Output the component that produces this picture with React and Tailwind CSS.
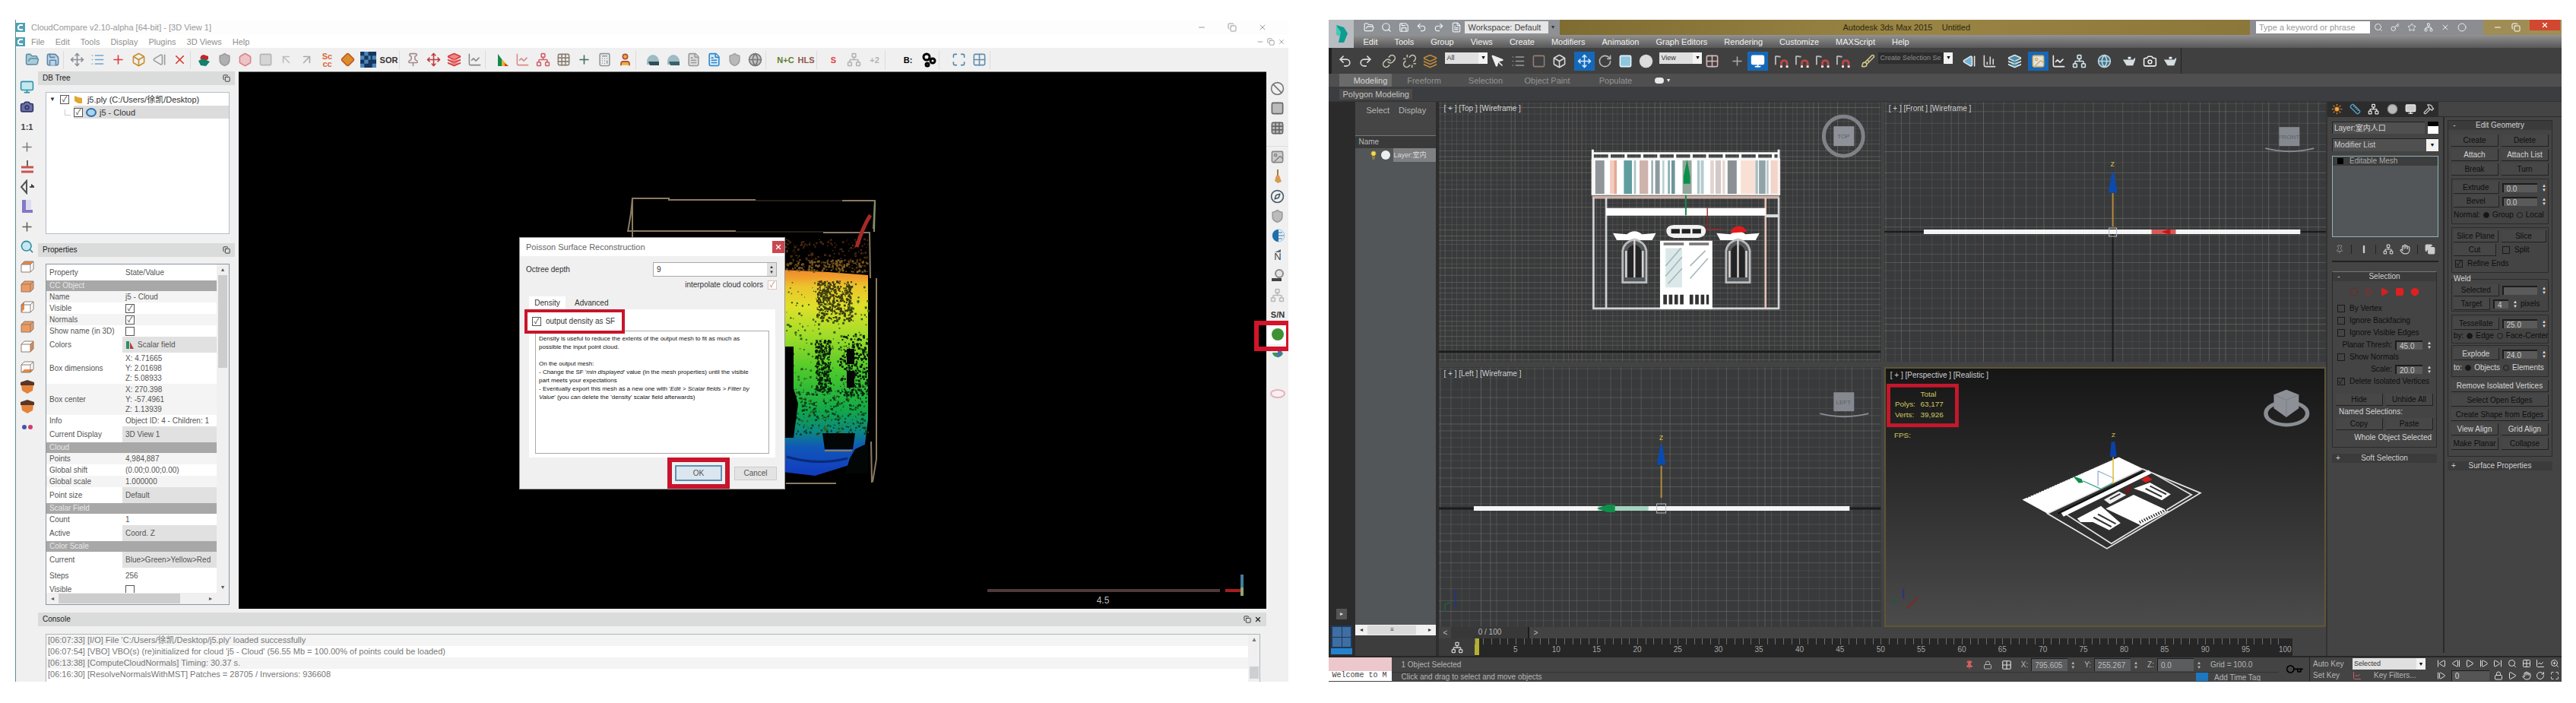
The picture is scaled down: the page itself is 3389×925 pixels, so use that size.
import React from "react";
import {
  ArrowUpLeft, ArrowUpRight, Ban, BarChart3, Box, Brush, Calculator, Camera, Circle, Cog, Compass, Copy,
  Crosshair, CupSoda, Diamond, FileText, FolderOpen, Globe, Grid2x2, Grid3x3, Hammer, Hand, Hexagon, Image, Key,
  Layers, Lightbulb, LineChart, Link, List, Lock, Magnet, Maximize, Minus, Monitor, MousePointer, Move, Network,
  Pin, Play, Plus, Redo2, RotateCw, Ruler, Save, Search, Shield, SkipBack, SkipForward, Square, Star, StepBack,
  StepForward, Sun, Target, Undo2, Unlink, User, X, ZoomIn,
} from "lucide-react";

// small seeded generator, so the drawings stay the same on each render
const makeRandom = (seed) => () => {
  seed = (seed * 1103515245 + 12345) % 2147483648;
  return seed / 2147483648;
};

const specks = (seed, count, x, y, w, h) => {
  const rnd = makeRandom(seed);
  return Array.from({ length: count }, () => [x + rnd() * w, y + rnd() * h, 1 + rnd() * 2]);
};

const Specks = ({ points, fill }) => (
  <g fill={fill}>
    {points.map(([x, y, s], i) => (
      <rect key={i} x={x} y={y} width={s} height={s} />
    ))}
  </g>
);

const App = () => {
  return (
    <div className="flex gap-[53px] bg-white pt-[26px] pb-[27px] pl-5 pr-[19px] text-[11px] leading-[14px] font-['Liberation_Sans','Noto_Sans_CJK_SC',sans-serif]">
      <CloudWindow />
      <MaxWindow />
    </div>
  );
};

/* ---------- CloudCompare ---------- */

const mainTools = [
  { gap: "ml-2", items: [[FolderOpen, "text-[#5f8ea3] fill-[#a9cbd8]"], [Save, "text-[#5d86a8] fill-[#bcd6e8]"]] },
  {
    gap: "ml-1",
    items: [
      [Move, "text-[#8a9096]"], [List, "text-[#6fa4cf]"], [Plus, "text-[#e0393e]"],
      [Box, "text-[#c98d2c]"], [StepBack, "text-[#9a9a9a]"], [X, "text-[#d9372c]"],
    ],
  },
  {
    gap: "ml-1",
    items: [
      ["rg"], [Shield, "text-[#9b9b9b] fill-[#b0b0b0]"], [Hexagon, "text-[#d9848a] fill-[#ecc4c6]"], [Square, "text-[#b5b5b5] fill-[#d5d5d5]"],
      [ArrowUpLeft, "text-[#bdbdbd]"], [ArrowUpRight, "text-[#a8a8a8]"], ["Sc cc", "text-[#d9673a]"],
      [Diamond, "text-[#b95f1e] fill-[#e08a2e]"], ["checker"], ["SOR", "text-[#333]"],
    ],
  },
  {
    gap: "ml-1",
    items: [
      [Pin, "text-[#a58a8a]"], [Move, "text-[#c23a3a]"], [Layers, "text-[#d63a3a] fill-[#e88]"], [LineChart, "text-[#8a8a8a]"],
    ],
  },
  {
    gap: "ml-2",
    items: [
      ["tri"], [LineChart, "text-[#d98a8a]"], [Network, "text-[#d0606a]"], [Grid3x3, "text-[#8b7f73]"],
      [Plus, "text-[#3f6f5c]"], [Calculator, "text-[#8f959b]"], [User, "text-[#b8453a] fill-[#e2b33c]"],
    ],
  },
  {
    gap: "ml-2",
    items: [
      ["cap", "#2f4f56"], ["cap", "#3d6168"], [FileText, "text-[#9a9a9a] fill-[#ddd]"],
      [FileText, "text-[#2d86c9] fill-[#d4e8f6]"], [Shield, "text-[#a0a0a0] fill-[#b8b8b8]"], [Globe, "text-[#777] fill-[#c4c4c4]"],
    ],
  },
  { gap: "ml-3", items: [["N+C", "text-[#5f7d2e]"], ["HLS", "text-[#8a5a4a]"]] },
  { gap: "ml-2", items: [["S", "text-[#e04040]"], [Network, "text-[#b3b3b3]"], ["+2", "text-[#b3b3b3]"]] },
  { gap: "ml-4", items: [["B:", "text-black"], ["cogs"]] },
  { gap: "ml-3", items: [[Maximize, "text-[#4f86ad]"], [Grid2x2, "text-[#5f8fb0]"]] },
];

const viewTools = [
  [Monitor, "text-[#2f93a8] fill-[#c5e8ef]"], [Camera, "text-[#2f3566] fill-[#6a6fa5]"], ["1:1", "text-[#444]"], [Plus, "text-[#7d7d7d]"],
  ["pivot"], ["fly"], ["corner"], [Plus, "text-[#5f6657]"], [Search, "text-[#2b8ba3] fill-[#c5e8ef]"],
  ["cube", "top"], ["cube", "full"], ["cube", "left"], ["cube", "full"], ["cube", "right"], ["cube", "bottom"],
  ["shield"], ["shield"], ["dots"],
];

const shaderTools = [
  [Ban, "text-[#777]"], [Grid2x2, "text-[#666] fill-[#bbb]"], [Grid3x3, "text-[#666] fill-[#bbb]"], null,
  [Image, "text-[#888] fill-[#ccc]"], ["brush"], [Compass, "text-[#4a5b66]"], [Shield, "text-[#999] fill-[#bbb]"],
  ["half"], ["north"], ["lens"], [Network, "text-[#b9b9b9]"],
  ["S/N", "text-[#333]"], ["green"], ["multi"], null, ["ellipse"],
];

const Glyph = ({ icon }) => {
  const [Icon, style] = icon;
  if (typeof Icon !== "string") return <Icon className={`size-[19px] ${style}`} strokeWidth={2} />;
  switch (Icon) {
    case "rg":
      return (
        <svg viewBox="0 0 20 20" className="size-5">
          <path d="M9 3a5 4 0 0 0 1 8l5-2V5z" fill="#c8242b" />
          <path d="M2 11l6-3 9 4-5 6-7-1z" fill="#12806a" />
        </svg>
      );
    case "checker":
      return (
        <svg viewBox="0 0 20 20" className="size-[21px]">
          <rect width="20" height="20" fill="#14375e" />
          <path d="M5 0h5v5H5zM15 5h5v5h-5zM0 5h5v5H0zM5 10h5v5H5zM10 5h3v5h-3zM15 15h5v5h-5zM0 15h5v5H0z" fill="#4f86b8" />
        </svg>
      );
    case "tri":
      return (
        <svg viewBox="0 0 20 20" className="size-5">
          <path d="M4 2v16h12z" fill="#138a4c" />
          <path d="M9 9v9h9z" fill="#e2b52f" />
          <path d="M13 14v4h5z" fill="#d3372d" />
        </svg>
      );
    case "cap":
      return (
        <svg viewBox="0 0 20 20" className="size-5">
          <path d="M2 12a8 9 0 0 1 16 0v4H2z" fill="#9dbcc4" />
          <path d="M4 12h14v5H6z" fill={style} />
        </svg>
      );
    case "cogs":
      return (
        <svg viewBox="0 0 20 20" className="size-5">
          <circle cx="7" cy="6" r="4" fill="none" stroke="#000" strokeWidth="3" />
          <circle cx="15" cy="11" r="3" fill="none" stroke="#000" strokeWidth="3" />
          <circle cx="8" cy="16" r="2" fill="none" stroke="#000" strokeWidth="3" />
        </svg>
      );
    case "pivot":
      return (
        <svg viewBox="0 0 20 20" className="size-5">
          <path d="M10 2v9" stroke="#666" strokeWidth="2" />
          <path d="M2 11h16M2 17h16" stroke="#c95450" strokeWidth="3" />
        </svg>
      );
    case "fly":
      return (
        <svg viewBox="0 0 20 20" className="size-5">
          <path d="M9 2L2 10l7 8zM13 10h6" fill="none" stroke="#555" strokeWidth="2" />
          <path d="M15 6l4 3-4 1z" fill="#333" />
        </svg>
      );
    case "corner":
      return (
        <svg viewBox="0 0 20 20" className="size-5">
          <path d="M3 1h12v12H3z" fill="#dcd9f2" />
          <path d="M3 1h5v13h9v4H3z" fill="#8379c4" />
        </svg>
      );
    case "cube":
      return (
        <svg viewBox="0 0 20 20" className="size-5">
          <path d="M2 7l4-4h12v10l-4 4H2z" fill={style === "full" ? "#ee9a5f" : "#fff"} />
          {style === "top" && <path d="M2 7l4-4h12l-4 4z" fill="#e98846" />}
          {style === "bottom" && <path d="M2 17l4-4h12l-4 4z" fill="#e98846" />}
          {style === "left" && <path d="M2 7l4-4v10l-4 4z" fill="#e98846" />}
          {style === "right" && <path d="M14 7l4-4v10l-4 4z" fill="#e98846" />}
          <path d="M2 7l4-4h12v10l-4 4H2zM2 7h12v10M14 7l4-4" fill="none" stroke="#8b7d73" />
        </svg>
      );
    case "shield":
      return (
        <svg viewBox="0 0 20 20" className="size-5">
          <path d="M1 4l9-3 9 3v4H1z" fill="#5a3626" />
          <path d="M2 8h16l-1 7-7 4-7-4z" fill="#e58339" />
        </svg>
      );
    case "dots":
      return (
        <svg viewBox="0 0 20 20" className="size-5">
          <circle cx="6" cy="10" r="3" fill="#4455a8" />
          <circle cx="14" cy="10" r="3" fill="#d13b6e" />
        </svg>
      );
    case "brush":
      return (
        <svg viewBox="0 0 20 20" className="size-5">
          <path d="M10 1v10" stroke="#a9793a" strokeWidth="2" />
          <path d="M8 9h4l3 8-5 2-4-3z" fill="#d99a52" />
        </svg>
      );
    case "half":
      return (
        <svg viewBox="0 0 20 20" className="size-5">
          <circle cx="11" cy="10" r="8" fill="#e8f0f6" stroke="#9cc4dc" />
          <path d="M11 2a8 8 0 0 0 0 16z" fill="#1f6fa8" />
          <path d="M11 10h7M11 6h5M11 14h5" stroke="#8fb6d0" strokeWidth="2" />
        </svg>
      );
    case "north":
      return (
        <span className="flex flex-col items-center text-[13px] leading-[12px] text-[#3d4650]">
          <svg viewBox="0 0 8 4" className="h-1 w-2"><path d="M0 4l8-4v4z" fill="#5c6a78" /></svg>
          N
        </span>
      );
    case "lens":
      return (
        <svg viewBox="0 0 20 20" className="size-5">
          <circle cx="12" cy="8" r="5" fill="#e2e2e2" stroke="#8a8a8a" strokeWidth="2" />
          <path d="M2 14h13v4H2z" fill="#444" />
        </svg>
      );
    case "green":
      return (
        <svg viewBox="0 0 20 20" className="size-5">
          <circle cx="10" cy="10" r="8" fill="#3f9135" />
        </svg>
      );
    case "multi":
      return (
        <svg viewBox="0 0 20 20" className="size-5">
          <path d="M3 8a7 6 0 1 0 14 0z" fill="#2f9a5a" />
          <path d="M10 2l6 5-6 8z" fill="#5568c0" />
          <path d="M10 1l3 5H8z" fill="#d0396a" />
        </svg>
      );
    case "ellipse":
      return (
        <svg viewBox="0 0 20 20" className="size-5">
          <ellipse cx="10" cy="10" rx="9" ry="5" fill="#fbeef0" stroke="#e2b3bc" strokeWidth="2" />
        </svg>
      );
    default:
      return <span className={`text-[11px] leading-[10px] font-bold ${style}`}>{Icon}</span>;
  }
};

const CloudWindow = () => {
  return (
    <section className="flex min-w-0 flex-[1675] flex-col overflow-hidden border-l border-[#5c8c94] bg-[#f0f0f0]">
      <div className="flex h-5 items-center justify-between bg-[#fdfdfd] pr-7 text-[#9a9a9a]">
        <div className="flex items-center gap-2">
          <CcLogo />
          <h1>CloudCompare v2.10-alpha [64-bit] - [3D View 1]</h1>
        </div>
        <div className="flex gap-7">
          <button aria-label="Minimize"><Minus className="size-3" /></button>
          <button aria-label="Restore"><Copy className="size-3" /></button>
          <button aria-label="Close"><X className="size-3" /></button>
        </div>
      </div>
      <div className="flex h-[17px] items-center justify-between bg-white pr-1 text-[#8f8f8f]">
        <nav className="flex items-center">
          <CcLogo />
          <div className="ml-2 flex gap-3.5">
            {["File", "Edit", "Tools", "Display", "Plugins", "3D Views", "Help"].map((m) => (
              <button key={m}>{m}</button>
            ))}
          </div>
        </nav>
        <div className="flex gap-1">
          <button aria-label="Minimize view"><Minus className="size-2.5" /></button>
          <button aria-label="Restore view"><Copy className="size-2.5" /></button>
          <button aria-label="Close view"><X className="size-2.5" /></button>
        </div>
      </div>

      <div className="flex h-[31px] items-center bg-[#f0f0f0]">
        {mainTools.map((group, i) => (
          <div key={i} className={`flex border-r border-[#dcdcdc] ${group.gap}`}>
            {group.items.map((icon, j) => (
              <button key={j} aria-label={`Tool ${i + 1}-${j + 1}`} className="flex h-6 w-[27px] items-center justify-center">
                <Glyph icon={icon} />
              </button>
            ))}
          </div>
        ))}
      </div>

      <div className="flex">
        <div className="flex w-[29px] shrink-0 flex-col pt-[7px]">
          <div className="flex h-[474px] flex-col">
            {viewTools.map((icon, i) => (
              <button key={i} aria-label={`View tool ${i + 1}`} className="flex flex-1 items-center justify-center">
                <Glyph icon={icon} />
              </button>
            ))}
          </div>
        </div>

        <div className="flex min-w-0 flex-1 flex-col">
          <div className="flex">
            <aside className="w-[264px] shrink-0 pr-[5px] pb-[5px]">
              <DbTree />
              <Properties />
            </aside>
            <CloudView />
          </div>
          <Console />
        </div>

        <div className="relative flex w-[29px] shrink-0 flex-col pt-[9px]">
          {shaderTools.map((icon, i) =>
            icon ? (
              <button key={i} aria-label={`Shader ${i + 1}`} className={`flex h-[26px] items-center justify-center ${icon[0] === "green" ? "bg-white" : ""}`}>
                <Glyph icon={icon} />
              </button>
            ) : (
              <div key={i} className={i === 3 ? "h-3 border-b border-[#ddd]" : "h-[26px]"} />
            )
          )}
          <div className="pointer-events-none absolute top-[328px] -left-4 h-10 w-12 border-[6px] border-[#d3142a]" />
        </div>
      </div>
    </section>
  );
};

const CcLogo = () => (
  <svg viewBox="0 0 12 12" className="size-3">
    <rect width="12" height="12" fill="#4fa3b5" />
    <path d="M9 3H5L3 5v3l2 1h4" fill="none" stroke="#fff" strokeWidth="2" />
  </svg>
);

const DockHeader = ({ title, closable }) => (
  <div className="flex h-[18px] items-center justify-between bg-[#dadbdb] px-1.5 text-[#222]">
    <h2 className="text-[10px]">{title}</h2>
    <div className="flex gap-1">
      <button aria-label={`Float ${title}`}><Copy className="size-2.5" /></button>
      {closable && <button aria-label={`Close ${title}`}><X className="size-2.5" strokeWidth={3} /></button>}
    </div>
  </div>
);

const Check = ({ label, checked, dark, hideLabel }) => (
  <label className="flex items-center gap-1.5 whitespace-nowrap">
    <input
      type="checkbox"
      defaultChecked={checked}
      aria-label={hideLabel ? label : undefined}
      className={
        dark
          ? "flex size-2.5 shrink-0 appearance-none items-center justify-center border border-[#1a1a1a] text-[#0c0c0c] checked:after:content-['✓'] checked:after:text-[10px]"
          : "flex size-3 shrink-0 appearance-none items-center justify-center border border-[#555] bg-white text-[#333] checked:after:content-['✓'] checked:after:text-[10px]"
      }
    />
    {!hideLabel && label}
  </label>
);

const DbTree = () => (
  <section>
    <DockHeader title="DB Tree" />
    <div className="mt-[9px] mr-[7px] mb-3 ml-2.5 h-[187px] border border-[#b5bec9] bg-white text-[#333]">
      <div className="flex h-[17px] items-center gap-1.5 px-1">
        <span className="text-[8px]">▼</span>
        <Check label="j5.ply visible" checked hideLabel />
        <svg viewBox="0 0 12 12" className="size-3"><path d="M1 1l5 2 5 1v7H6L1 8z" fill="#e3a62f" /></svg>
        <span>j5.ply (C:/Users/徐凯/Desktop)</span>
      </div>
      <div className="flex h-[17px] items-center pl-6">
        <span className="mr-1 h-2 w-2 border-b border-l border-[#ccc]" />
        <div className="flex h-full flex-1 items-center gap-1 bg-[#dcdcdc]">
          <Check label="j5 - Cloud visible" checked hideLabel />
          <svg viewBox="0 0 14 12" className="h-3 w-3.5">
            <ellipse cx="7" cy="6" rx="6" ry="5" fill="#a9d3ee" stroke="#2f6fa8" strokeWidth="2" />
          </svg>
          <span>j5 - Cloud</span>
        </div>
      </div>
    </div>
  </section>
);

const rows = [
  { section: "CC Object" },
  { name: "Name", value: "j5 - Cloud", shade: true },
  { name: "Visible", check: true, on: true },
  { name: "Normals", check: true, on: true, shade: true },
  { name: "Show name (in 3D)", check: true },
  { name: "Colors", value: "Scalar field", tall: true, button: true, icon: true },
  { name: "Box dimensions", lines: ["X: 4.71665", "Y: 2.01698", "Z: 5.08933"] },
  { name: "Box center", lines: ["X: 270.398", "Y: -57.4961", "Z: 1.13939"], shade: true },
  { name: "Info", value: "Object ID: 4 - Children: 1" },
  { name: "Current Display", value: "3D View 1", tall: true, button: true },
  { section: "Cloud" },
  { name: "Points", value: "4,984,887", shade: true },
  { name: "Global shift", value: "(0.00;0.00;0.00)" },
  { name: "Global scale", value: "1.000000", shade: true },
  { name: "Point size", value: "Default", tall: true, button: true },
  { section: "Scalar Field" },
  { name: "Count", value: "1" },
  { name: "Active", value: "Coord. Z", tall: true, button: true },
  { section: "Color Scale" },
  { name: "Current", value: "Blue>Green>Yellow>Red", tall: true, button: true },
  { name: "Steps", value: "256", tall: true },
  { name: "Visible", check: true },
];

const Properties = () => (
  <section>
    <DockHeader title="Properties" />
    <div className="mt-[9px] mr-[7px] ml-2.5 h-[449px] overflow-hidden border border-[#8c97a0] bg-white text-[10px] text-[#555]">
      <div className="flex h-[432px]">
        <div className="min-w-0 flex-1 overflow-hidden">
          <table className="w-full table-fixed border-collapse">
            <thead>
              <tr className="h-[21px] text-left">
                <th className="w-[100px] pl-1 font-normal">Property</th>
                <th className="pl-1 font-normal">State/Value</th>
              </tr>
            </thead>
            <tbody>
              {rows.map((row, i) =>
                row.section ? (
                  <tr key={i} className="h-3.5 bg-[#a8a8a8] text-[#e6e6e6]">
                    <th colSpan={2} className="pl-1 text-left font-normal">{row.section}</th>
                  </tr>
                ) : (
                  <tr
                    key={i}
                    className={`${row.tall ? "h-[21px]" : row.lines ? "h-[41px]" : "h-[15px]"} ${row.shade ? "bg-[#f4f4f4]" : "bg-white"}`}
                  >
                    <td className="p-0 pl-1 whitespace-nowrap">{row.name}</td>
                    <td className={`p-0 pl-1 whitespace-nowrap ${row.button ? "bg-[#e1e1e1]" : ""}`}>
                      {row.check && <Check label={row.name} checked={row.on} hideLabel />}
                      {row.lines && row.lines.map((l) => <div key={l} className="leading-[13px]">{l}</div>)}
                      {row.icon ? (
                        <span className="flex items-center gap-1">
                          <svg viewBox="0 0 12 12" className="size-3">
                            <path d="M1 1h4v10H1z" fill="#2e8f62" />
                            <path d="M6 2l5 9H6z" fill="#b34040" />
                          </svg>
                          {row.value}
                        </span>
                      ) : (
                        row.value
                      )}
                    </td>
                  </tr>
                )
              )}
            </tbody>
          </table>
        </div>
        <div className="flex w-4 flex-col items-center bg-[#f0f0f0] text-[8px]">
          <span>▴</span>
          <div className="h-[122px] w-3 bg-[#cdcdcd]" />
          <span className="mt-auto">▾</span>
        </div>
      </div>
      <div className="flex h-[15px] items-center bg-[#f0f0f0] pr-4 text-[8px]">
        <span className="w-4 text-center">◂</span>
        <div className="h-[13px] w-40 bg-[#cdcdcd]" />
        <span className="ml-auto w-4 text-center">▸</span>
      </div>
    </div>
  </section>
);

const upperSpecks = specks(7, 150, 1033, 312, 108, 38);
const roofSpecks = specks(11, 160, 1033, 340, 108, 16);
const treeSpecks = specks(23, 420, 1074, 368, 46, 52);
const wallSpecks = specks(31, 300, 1034, 370, 108, 200);
const windowSpecks = specks(5, 300, 1072, 446, 20, 68);
const windowSpecks2 = specks(9, 320, 1104, 438, 37, 80);
const lowSpecks = specks(3, 220, 1045, 510, 95, 60);

const CloudView = () => (
  <div className="relative min-w-0 flex-1 border-t border-[#777] bg-black">
    <svg viewBox="314 94 1352 706" preserveAspectRatio="xMinYMin meet" className="absolute inset-0 h-full w-full">
      <defs>
        <linearGradient id="height" x1="0" y1="0" x2="0" y2="1">
          <stop offset="0" stopColor="#ee8a2c" />
          <stop offset="0.04" stopColor="#f0a02c" />
          <stop offset="0.08" stopColor="#ecc42c" />
          <stop offset="0.18" stopColor="#dfe02a" />
          <stop offset="0.32" stopColor="#a0dc28" />
          <stop offset="0.5" stopColor="#48c82c" />
          <stop offset="0.68" stopColor="#12a848" />
          <stop offset="0.78" stopColor="#0b8a80" />
          <stop offset="0.86" stopColor="#1058b8" />
          <stop offset="1" stopColor="#123ac0" />
        </linearGradient>
      </defs>
      <path d="M1030 354l60 3 52 4v190l-5 40-20 20-45 14-42-5z" fill="url(#height)" />
      <Specks points={upperSpecks} fill="#4a2812" />
      <Specks points={roofSpecks} fill="#7a5a20" />
      <Specks points={wallSpecks} fill="#2f6418" />
      <Specks points={treeSpecks} fill="#3a3c10" />
      <Specks points={windowSpecks} fill="#052008" />
      <Specks points={windowSpecks2} fill="#041c08" />
      <Specks points={lowSpecks} fill="#06401f" />
      <path d="M1030 455h14v55l6 20-6 45h-14z" fill="#000" />
      <path d="M1114 458h10v20h-10zM1114 487h10v22h-10zM1082 569h43l-3 21h-37zM1125 590l17-8v40h-30l6-20z" fill="#020604" />
      <path d="M1035 600q40 12 80 2" stroke="#0b2878" strokeWidth="3" fill="none" />
      <g fill="none" stroke="#8a7a60" strokeWidth="2">
        <path d="M832 312v-52h48v2h114M1108 263h43l-2 37M832 260l-2 20-4 24M825 303h143M1083 305h61l1 60M1153 365v238M1146 580l1 54M1153 603l-5 30M1034 635h66M1085 592h36" />
        <path d="M994 263h114M968 304h115" stroke="#241f18" />
        <path d="M1151 264l-1 40" stroke="#7d9468" />
      </g>
      <path d="M1145 282q-10 16-18 42" stroke="#a52a26" strokeWidth="5" fill="none" />
      <path d="M1299 776h306" stroke="#4f3a3a" strokeWidth="4" />
      <text x="1451" y="793" fill="#bbb" fontSize="12" textAnchor="middle">4.5</text>
      <path d="M1612 776h20" stroke="#a81c22" strokeWidth="4" />
      <path d="M1634 755v17" stroke="#3f7f9c" strokeWidth="4" />
      <path d="M1634 772v11" stroke="#8fa86c" strokeWidth="4" />
    </svg>
    <PoissonDialog />
  </div>
);

const PoissonDialog = () => (
  <form className="absolute top-[217px] left-[369px] flex h-[332px] w-[350px] flex-col border border-[#999] bg-[#f0f0f0] text-[10px] text-[#333]">
    <div className="flex h-[25px] items-center justify-between bg-white pl-2">
      <h2 className="text-[11px] text-[#666]">Poisson Surface Reconstruction</h2>
      <button type="button" aria-label="Close" className="flex size-4 items-center justify-center bg-[#c9484f] text-white">
        <X className="size-2.5" strokeWidth={3} />
      </button>
    </div>
    <div className="flex items-center justify-between pt-2 pr-2.5 pl-2">
      <label htmlFor="octree">Octree depth</label>
      <div className="flex h-[19px] w-[163px] border border-[#aaa] bg-white">
        <input id="octree" defaultValue="9" className="min-w-0 flex-1 px-1" />
        <span className="flex w-3 flex-col justify-center bg-[#e0e0e0] text-center text-[6px] leading-[7px]">
          <span>▲</span><span>▼</span>
        </span>
      </div>
    </div>
    <label className="mt-1 flex items-center justify-end gap-1.5 pr-2.5">
      interpolate cloud colors
      <input
        type="checkbox"
        defaultChecked
        className="flex size-3 appearance-none items-center justify-center border border-[#ddc4bc] bg-white text-[#b07a5a] checked:after:content-['✓'] checked:after:text-[10px]"
      />
    </label>
    <div className="mt-2 flex px-3">
      <button type="button" className="h-[17px] w-12 bg-white">Density</button>
      <button type="button" className="ml-2 h-[17px] px-1">Advanced</button>
    </div>
    <div className="mx-3 flex h-[200px] flex-col bg-white">
      <div className="z-10 -ml-1.5 flex h-8 w-[132px] items-center border-4 border-[#c8142c] bg-white pl-1.5">
        <Check label="output density as SF" checked />
      </div>
      <div className="mr-2 -mt-1 ml-2 h-[162px] border border-[#aaa] p-1 text-[8px] leading-[11px] whitespace-nowrap text-[#111]">
        <p>Density is useful to reduce the extents of the output mesh to fit as much as</p>
        <p>possible the input point cloud.</p>
        <br />
        <p>On the output mesh:</p>
        <p>- Change the SF '<i>min displayed</i>' value (in the mesh properties) until the visible</p>
        <p>part meets your expectations</p>
        <p>- Eventually export this mesh as a new one with '<i>Edit &gt; Scalar fields &gt; Filter by</i></p>
        <p><i>Value</i>' (you can delete the 'density' scalar field afterwards)</p>
      </div>
    </div>
    <div className="mt-auto flex items-center justify-end gap-1.5 pr-2.5 text-[#555]">
      <div className="h-[41px] w-[82px] border-[6px] border-[#c8142c] p-1">
        <button type="submit" className="h-full w-full border-2 border-[#5b93b5] bg-[#dbe6ee] leading-[15px]">OK</button>
      </div>
      <button type="button" className="h-[18px] w-14 border border-[#ccc] bg-[#e3e3e3]">Cancel</button>
    </div>
  </form>
);

const log = [
  "[06:07:33] [I/O] File 'C:/Users/徐凯/Desktop/j5.ply' loaded successfully",
  "[06:07:54] [VBO] VBO(s) (re)initialized for cloud 'j5 - Cloud' (56.55 Mb = 100.00% of points could be loaded)",
  "[06:13:38] [ComputeCloudNormals] Timing: 30.37 s.",
  "[06:16:30] [ResolveNormalsWithMST] Patches = 28705 / Inversions: 936608",
];

const Console = () => (
  <section className="pt-[5px]">
    <DockHeader title="Console" closable />
    <div className="mt-2.5 mr-2 ml-2.5 flex h-[63px] border border-b-0 border-[#b0b6ba] bg-white">
      <div className="flex-1 text-[#777]">
        {log.map((line) => (
          <p key={line} className="h-[15px] bg-white px-0.5 odd:bg-[#f4f4f4]">{line}</p>
        ))}
      </div>
      <div className="flex w-[15px] flex-col items-center bg-[#f0f0f0] text-[8px] text-[#777]">
        <span>▲</span>
        <div className="mt-auto mb-1 h-4 w-3 bg-[#cdd0d1]" />
      </div>
    </div>
  </section>
);

/* ---------- 3ds Max ---------- */

const MaxWindow = () => {
  return (
    <section className="flex min-w-0 flex-[1622] flex-col overflow-hidden bg-[#444] text-[#ddd]">
      <header className="flex">
        <div className="flex h-[37px] w-[33px] shrink-0 items-center justify-center bg-[#b9bcc0]">
          <svg viewBox="0 0 20 28" className="h-7 w-5">
            <path d="M3 2l10 3 5 8-5 12H6l2-9z" fill="#0c9c90" />
            <path d="M3 2l6 9-1 6-5-2z" fill="#48c8b8" />
          </svg>
        </div>
        <div className="min-w-0 flex-1">
          <MaxTitleBar />
          <nav className="flex h-[17px] items-center gap-[22px] bg-linear-to-b from-[#929292] to-[#585858] pl-3 text-[#f2f2f2]">
            {["Edit", "Tools", "Group", "Views", "Create", "Modifiers", "Animation", "Graph Editors", "Rendering", "Customize", "MAXScript", "Help"].map((m) => (
              <button key={m}>{m}</button>
            ))}
          </nav>
        </div>
      </header>
      <MaxToolbar />
      <div className="flex h-[17px] items-center bg-[#4f4f4f] pl-3.5 text-[#949494]">
        <button className="h-full w-[69px] bg-[#6a6a6a] pl-3 text-[#d5d5d5]">Modeling</button>
        <button className="ml-3 w-[60px]">Freeform</button>
        <button className="ml-6 w-[54px]">Selection</button>
        <button className="ml-4 w-[76px]">Object Paint</button>
        <button className="ml-6 w-14">Populate</button>
        <button aria-label="Ribbon options" className="ml-6 flex items-center gap-1 text-[8px] text-[#eee]">
          <span className="h-2 w-3 rounded-sm bg-[#e8e8e8]" /> ▾
        </button>
      </div>
      <div className="flex h-[19px] items-center bg-[#3c3d40] pl-3.5 text-[#c4c4c4]">
        <span className="bg-[#4b4b4b] px-1">Polygon Modeling</span>
      </div>

      <div className="flex border-t border-[#333]">
        <div className="flex w-[34px] shrink-0 flex-col items-center bg-[#2b2b2b] pb-0.5">
          <span className="mt-auto mb-2 flex size-3.5 items-center justify-center bg-[#555] text-[8px]">▸</span>
          <div className="grid h-[38px] w-7 grid-cols-2 gap-px border-b-8 border-[#2482cc] bg-[#1d3a5c] p-0.5">
            <span className="bg-[#3f6ea3]" /><span className="bg-[#3f6ea3]" />
            <span className="bg-[#3f6ea3]" /><span className="bg-[#3f6ea3]" />
          </div>
        </div>
        <SceneExplorer />
        <div className="min-w-0 flex-1">
          <div className="grid grid-cols-2 gap-x-1 gap-y-[7px] bg-[#434343]">
            <TopView />
            <FrontView />
            <LeftView />
            <PerspectiveView />
          </div>
          <Timeline />
        </div>
        <CommandPanel />
      </div>
      <StatusBar />
    </section>
  );
};

const quickIcons = [FolderOpen, Search, Save, Undo2, Redo2, FileText];
const infoIcons = [Search, Key, Star, Network, X, Circle];

const MaxTitleBar = () => (
  <div className="flex h-5 bg-[#8f7a3c]">
    <div className="flex w-[271px] shrink-0 items-center bg-[#8e9296] pl-2 text-[#eef2f5]">
      {quickIcons.map((Icon, i) => (
        <button key={i} aria-label={`Quick access ${i + 1}`} className="flex w-[23px] justify-center">
          <Icon className="size-3.5" />
        </button>
      ))}
      <select aria-label="Workspace" className="h-4 w-[110px] appearance-none bg-[#e6e6e6] px-1 text-[#444]">
        <option>Workspace: Default</option>
      </select>
      <span className="ml-1 text-[8px] text-[#333]">▾</span>
    </div>
    <h1 className="flex flex-1 items-center justify-center bg-linear-to-r from-[#7f6c31] via-[#9a8545] to-[#8c773a] pl-1 whitespace-pre text-[#2e2910]">
      Autodesk 3ds Max 2015    Untitled
    </h1>
    <div className="flex w-[307px] shrink-0 items-center bg-[#8b8d90] pl-2">
      <input aria-label="Search" placeholder="Type a keyword or phrase" className="h-4 w-[150px] bg-white px-1 text-[#555] placeholder:text-[#999]" />
      {infoIcons.map((Icon, i) => (
        <button key={i} aria-label={`Info center ${i + 1}`} className="flex w-[22px] justify-center text-[#e4ebf2]">
          <Icon className="size-3" />
        </button>
      ))}
    </div>
    <div className="flex w-[103px] shrink-0 justify-end gap-3 bg-[#a08d55] pr-0.5 text-white">
      <button aria-label="Minimize"><Minus className="size-3" /></button>
      <button aria-label="Restore"><Copy className="size-3" /></button>
      <button aria-label="Close" className="flex h-3.5 w-10 items-center justify-center bg-[#d2472f]">
        <X className="size-2.5" strokeWidth={3} />
      </button>
    </div>
  </div>
);

const DropDown = ({ label, value, width, dark }) => (
  <div className={`flex h-[15px] items-center ${width} ${dark ? "bg-[#2e2e2e] text-[#8d8d8d]" : "bg-[#e0e0e0] text-[#333]"}`}>
    <select aria-label={label} className="h-full min-w-0 flex-1 appearance-none pl-0.5 text-[9px]">
      <option>{value}</option>
    </select>
    <span className="flex h-full w-3 shrink-0 items-center justify-center bg-[#f2f2f2] text-[7px] text-black">▼</span>
  </div>
);

const MaxTool = ({ Icon, on, color = "text-[#d9d9d9]", name }) => (
  <button aria-label={name} className={`flex h-[25px] w-[27px] shrink-0 items-center justify-center ${on ? "bg-[#1568b8]" : ""}`}>
    <Icon className={`size-[19px] ${color}`} strokeWidth={2} />
  </button>
);

const Gap = () => <div className="w-1.5" />;

const SnapIcon = ({ className }) => (
  <svg viewBox="0 0 20 20" className={className} fill="none">
    <path d="M2 3l7 1M2 3v12" stroke="#b5b5b5" strokeWidth="2" />
    <path d="M10 18v-5q0-4 4-4t4 4v5" stroke="#b84848" strokeWidth="3" />
    <path d="M10 16v3M18 16v3" stroke="#eee" strokeWidth="3" />
  </svg>
);

const Teapot = ({ className }) => (
  <svg viewBox="0 0 20 20" className={className}>
    <path d="M5 8h10l3-3v3l-3 8H6L1 8z" fill="#d4dde0" />
    <path d="M8 4h4v3H8z" fill="#eee" />
  </svg>
);

const MaxToolbar = () => (
  <div className="flex h-[34px] items-center border-l-4 border-[#222] bg-[#404040] pl-1 text-[#d9d9d9]">
    <MaxTool Icon={Undo2} name="Undo" />
    <MaxTool Icon={Redo2} name="Redo" />
    <div className="w-1" />
    <MaxTool Icon={Link} name="Link" color="text-[#c4bfae]" />
    <MaxTool Icon={Unlink} name="Unlink" color="text-[#c4bfae]" />
    <MaxTool Icon={Layers} name="Bind" color="text-[#c08a3a]" />
    <Gap />
    <div className="pb-2"><DropDown label="Selection filter" value="All" width="w-14" /></div>
    <MaxTool Icon={MousePointer} name="Select" color="fill-[#eee] text-[#eee]" />
    <MaxTool Icon={List} name="Select by name" color="text-[#999]" />
    <MaxTool Icon={Square} name="Region" color="text-[#8f7f75]" />
    <MaxTool Icon={Box} name="Window crossing" />
    <Gap />
    <MaxTool Icon={Move} name="Move" on color="text-[#cfe8ff]" />
    <MaxTool Icon={RotateCw} name="Rotate" color="text-[#b8b8b8]" />
    <MaxTool Icon={Square} name="Scale" color="fill-[#8fc7dd] text-[#e6f3f8]" />
    <MaxTool Icon={Crosshair} name="Place" color="fill-[#ddd]" />
    <div className="w-1" />
    <div className="pb-2"><DropDown label="Reference coordinates" value="View" width="w-14" /></div>
    <MaxTool Icon={Grid2x2} name="Pivot" color="text-[#d6b6b6]" />
    <Gap />
    <MaxTool Icon={Plus} name="Manipulate" color="text-[#aaa]" />
    <MaxTool Icon={Monitor} name="Keyboard override" on color="fill-white text-white" />
    <div className="w-1" />
    <MaxTool Icon={SnapIcon} name="Snap" />
    <MaxTool Icon={SnapIcon} name="Angle snap" />
    <MaxTool Icon={SnapIcon} name="Percent snap" />
    <MaxTool Icon={SnapIcon} name="Spinner snap" />
    <Gap />
    <MaxTool Icon={Brush} name="Edit sets" color="text-[#cfc48a]" />
    <div className="pb-2"><DropDown label="Named selection sets" value="Create Selection Se" width="w-[98px]" dark /></div>
    <div className="w-2" />
    <MaxTool Icon={StepBack} name="Mirror" color="fill-[#6fb3d6] text-[#e8e8e8]" />
    <MaxTool Icon={BarChart3} name="Align" />
    <Gap />
    <MaxTool Icon={Layers} name="Layers" color="fill-[#4f8ca6] text-[#d8e8ee]" />
    <div className="w-1" />
    <MaxTool Icon={Image} name="Ribbon" on color="fill-[#d8e6ee] text-[#e0b060]" />
    <MaxTool Icon={LineChart} name="Curve editor" color="text-[#eee]" />
    <MaxTool Icon={Network} name="Schematic" color="text-[#cfe4ea]" />
    <Gap />
    <MaxTool Icon={Globe} name="Material editor" color="fill-[#3f6f86] text-[#bcd4de]" />
    <Gap />
    <MaxTool Icon={Teapot} name="Render setup" />
    <MaxTool Icon={Camera} name="Rendered frame" color="text-[#eee]" />
    <MaxTool Icon={Teapot} name="Render" />
    <div className="h-full w-px bg-[#222]" />
  </div>
);

const SceneExplorer = () => (
  <aside className="flex w-[111px] shrink-0 flex-col border-r-4 border-l border-[#2d2d2d] bg-[#454545]">
    <div className="flex h-11 gap-3 px-3.5 pt-1 text-[#b5b5b5]">
      <button className="self-start">Select</button>
      <button className="self-start">Display</button>
    </div>
    <div className="flex h-[17px] items-center border-t border-[#777] bg-[#3a3a3a] pl-1 text-[10px] text-[#bbb]">Name</div>
    <div className="flex-1 bg-[#525658]">
      <div className="flex h-[18px] items-center gap-1 pl-[18px]">
        <Lightbulb className="size-3 fill-[#f2dc50] text-[#c8a830]" />
        <span className="size-3 rounded-full bg-[#eee]" />
        <span className="flex-1 bg-[#7e8082] text-[9px] leading-[18px] whitespace-nowrap text-[#d8d8d8]">Layer:室内</span>
      </div>
    </div>
    <div className="flex h-3.5 items-center bg-[#f0f0f0] text-[8px] text-[#333]">
      <span className="w-4 text-center">◂</span>
      <span className="w-16 bg-[#dadada] text-center leading-[12px]">≡</span>
      <span className="ml-auto w-4 text-center">▸</span>
    </div>
    <div className="h-[27px] bg-[#3d3d3d]" />
  </aside>
);

const gridLines = (seed, size, step) => {
  const rnd = makeRandom(seed);
  const out = [];
  for (let p = 2; p < size; p += step + rnd() * step) out.push([p, 0.25 + rnd() * 0.6]);
  return out;
};

const Grid = ({ seed, step }) => (
  <g stroke="#6a6461">
    {gridLines(seed, 582, step).map(([x, o]) => (
      <path key={x} d={`M${x} 0v342`} opacity={o} />
    ))}
    {gridLines(seed + 40, 342, step).map(([y, o]) => (
      <path key={y} d={`M0 ${y}h582`} opacity={o} />
    ))}
  </g>
);

const Viewport = ({ label, className = "bg-[#383a3b]", children }) => (
  <div className={`relative h-[342px] overflow-hidden ${className}`}>
    <svg viewBox="0 0 582 342" preserveAspectRatio="xMidYMid meet" className="absolute inset-0 h-full w-full">
      {children}
    </svg>
    <span className="absolute top-0.5 left-1.5 text-[10px] text-[#cfcfcf]">{label}</span>
  </div>
);

const ViewCube = ({ x, label }) => (
  <g>
    <path d={`M${x - 18} 61q32 8 64 0`} fill="none" stroke="#8a8d92" strokeWidth="2" />
    <rect x={x} y="33" width="27" height="25" fill="#85888f" />
    <text x={x + 13} y="49" fontSize="8" fill="#5c6068" textAnchor="middle">{label}</text>
  </g>
);

const stripes = [
  [297, 36, "#8f9598"], [355, 26, "#f3cdbf"], [372, 10, "#e6a896"], [410, 32, "#5f9da0"], [450, 8, "#a6c4c6"],
  [472, 34, "#cdb3ac"], [518, 8, "#9fb2b8"], [534, 18, "#8c9aa0"], [562, 8, "#b8d0d4"], [584, 8, "#86adb0"],
  [598, 14, "#6f9599"], [642, 36, "#93a79c"], [700, 10, "#a9c6cb"], [714, 12, "#b5cbd2"], [752, 14, "#e3d3cf"],
  [772, 22, "#d3cac8"], [800, 10, "#e6d6d0"], [820, 36, "#8a9194"], [872, 58, "#f9e0d5"], [930, 10, "#a7bcc2"],
  [944, 26, "#92a3a8"], [974, 8, "#b9c7cb"], [990, 38, "#f3d4c8"],
];

const FacadeWindow = ({ x, hot }) => (
  <g>
    <path d={`M${x - 85} 470l55 5q30-25 60 0l55-5-15 28h-140z`} fill="#fff" />
    {hot && <path d={`M${x - 30} 470q5-25 30-27t35 22z`} fill="#e01c1c" />}
    <path d={`M${x - 47} 665V540q5-35 47-45 42 10 47 45v125z`} fill="#55595b" stroke="#b9bcbe" strokeWidth="8" />
    <path d={`M${x - 27} 645V540q4-20 27-25 23 5 27 25v105z`} fill="#222425" />
    <path d={`M${x} 495v150M${x - 33} 540v105M${x + 33} 540v105`} stroke="#e2dad6" strokeWidth="7" />
  </g>
);

const Facade = () => (
  <g transform="translate(107 16) scale(0.3333)">
    <path d="M282 175h746v145H282z" fill="#fff" />
    {stripes.map(([x, w, fill]) => (
      <rect key={x} x={x} y="183" width={w} height="132" fill={fill} />
    ))}
    <path d="M287 140v180M1022 140v180M285 155h740M285 177h740" stroke="#f4f4f4" strokeWidth="9" />
    {[353, 418, 482, 547, 612, 677, 740, 806, 870, 936, 1000].map((x) => (
      <path key={x} d={`M${x} 155v22`} stroke="#fff" strokeWidth="10" />
    ))}
    <path d="M285 328h740" stroke="#c9b0a6" strokeWidth="12" />
    <path d="M290 330v438h732V330M340 330v438" fill="none" stroke="#cfd3d5" strokeWidth="8" />
    <path d="M970 330v438" stroke="#e6c2b6" strokeWidth="8" />
    <path d="M340 386h630" stroke="#fff" strokeWidth="30" />
    <path d="M970 402h52" stroke="#d8dcde" strokeWidth="12" />
    <path d="M578 462q0-22 30-24h96q30 2 30 24t-30 27h-96q-30-5-30-27z" fill="#f2f2f2" />
    <path d="M597 463h118" stroke="#222" strokeWidth="18" strokeDasharray="34 8" />
    <path d="M553 500h207v270H553z" fill="#fff" />
    <path d="M567 513h80M668 513h78" stroke="#777" strokeWidth="10" />
    <path d="M575 530h65v155h-65z" fill="#dbe8ea" />
    <path d="M575 600l60-70M575 640l65-75M585 670l55-60M672 600l60-60M672 650l70-80" stroke="#a7b8bb" strokeWidth="5" />
    <path d="M566 733h84M670 733h76" stroke="#333" strokeWidth="38" strokeDasharray="14 8" />
    <FacadeWindow x={452} />
    <FacadeWindow x={861} hot />
    <path d="M655 320v80" stroke="#168a4c" strokeWidth="6" />
    <path d="M646 275v-30l14-65 12 65v30z" fill="#0d8f4a" />
    <path d="M740 370v85h60" stroke="#9c2222" strokeWidth="4" fill="none" />
  </g>
);

const TopView = () => (
  <Viewport label="[ + ] [Top ] [Wireframe ]">
    <Grid seed={3} step={5} />
    <path d="M0 329h582" stroke="#1d1d1d" strokeWidth="3" />
    <Facade />
    <circle cx="533" cy="45" r="26" fill="none" stroke="#7f8287" strokeWidth="5" />
    <rect x="520" y="32" width="27" height="26" fill="#8e9198" />
    <text x="533" y="48" fontSize="8" fill="#5c6068" textAnchor="middle">TOP</text>
  </Viewport>
);

const FrontView = () => (
  <Viewport label="[ + ] [Front ] [Wireframe ]">
    <Grid seed={17} step={8} />
    <path d="M0 171h582M301 171v171" stroke="#1b1b1b" strokeWidth="2" />
    <path d="M52 171h496" stroke="#f4f4f4" strokeWidth="6" />
    <path d="M352 171h32" stroke="#d65a5a" strokeWidth="6" />
    <path d="M365 171l12-4v8z" fill="#c01818" />
    <path d="M301 120v44" stroke="#b48a3a" strokeWidth="2" />
    <path d="M297 118l4-24 4 24z" fill="#0b4bb0" stroke="#0b4bb0" strokeWidth="3" />
    <text x="298" y="85" fontSize="11" fill="#c8b850">z</text>
    <rect x="296" y="166" width="10" height="11" fill="none" stroke="#bbb" />
    <ViewCube x={520} label="FRONT" />
  </Viewport>
);

const LeftView = () => (
  <Viewport label="[ + ] [Left ] [Wireframe ]">
    <Grid seed={29} step={8} />
    <path d="M0 186h582" stroke="#1b1b1b" strokeWidth="3" />
    <path d="M46 186h495" stroke="#f4f4f4" strokeWidth="6" />
    <path d="M210 186h66" stroke="#a3d3bf" strokeWidth="6" />
    <path d="M208 186l14-5h10v10h-10z" fill="#0d8f4a" />
    <path d="M293 130v42" stroke="#b48a3a" strokeWidth="2" />
    <path d="M289 127l4-24 4 24z" fill="#0b4bb0" stroke="#0b4bb0" strokeWidth="3" />
    <text x="290" y="96" fontSize="11" fill="#c8b850">z</text>
    <rect x="287" y="180" width="12" height="12" fill="none" stroke="#bbb" />
    <path d="M22 292v24" stroke="#2a3380" strokeWidth="2" />
    <path d="M8 322v-10l8-2" fill="none" stroke="#1f5a3c" strokeWidth="2" />
    <ViewCube x={520} label="LEFT" />
  </Viewport>
);

const PerspectiveView = () => (
  <Viewport label="[ + ] [Perspective ] [Realistic ]" className="border-2 border-[#5e5634] bg-linear-to-b from-[#161616] to-[#4b4b4b]">
    <g transform="translate(-29 -22) scale(0.3954 0.3333)">
      <path d="M855 420l80 45-320 180-85-55z" fill="#fff" />
      <path d="M545 580l290-155" stroke="#333" strokeWidth="8" strokeDasharray="4 6" />
      <path d="M935 467l195 96-315 222-200-140z" fill="#303030" stroke="#e6e6e6" strokeWidth="5" />
      <path d="M975 487l125 83-270 195-150-115" fill="none" stroke="#e0e0e0" strokeWidth="5" />
      <path d="M935 480L650 645" stroke="#111" strokeWidth="7" />
      <path d="M960 478L665 650" stroke="#fff" strokeWidth="16" />
      <path d="M905 570l118 65-92 58-120-68z" fill="#fff" />
      <path d="M925 680l90-50" stroke="#333" strokeWidth="12" strokeDasharray="4 5" />
      <path d="M805 590l50-34 25 15-55 36z" fill="#f0f0f0" />
      <path d="M825 588l35-22" stroke="#333" strokeWidth="5" />
      <path d="M905 545l55-24 70 47-30 24-60-33z" fill="#fff" />
      <path d="M945 545l55 33M960 535l55 33" stroke="#333" strokeWidth="6" />
      <path d="M715 665l80-50 66 68-38 28-55-32-42 0z" fill="#fff" />
      <path d="M770 660l60 38M785 648l60 38" stroke="#333" strokeWidth="6" />
      <path d="M870 560l30-35-12 38z" fill="#701818" />
      <path d="M930 510l20-15 18 14-22 12z" fill="#d81c1c" />
      <path d="M700 495l30 12 5 14-15 2z" fill="#0d8f4a" />
      <path d="M735 515l60 32 40-25" fill="none" stroke="#4fae98" strokeWidth="4" />
      <path d="M785 475v60M785 475l55 30" fill="none" stroke="#88a8c8" strokeWidth="3" />
      <path d="M836 420v105" stroke="#e0c040" strokeWidth="4" />
      <path d="M825 418l5-60h12l6 60z" fill="#0b40a8" />
      <text x="830" y="338" fontSize="28" fill="#c8b850">z</text>
      <ellipse cx="1420" cy="245" rx="70" ry="46" fill="none" stroke="#8a8d92" strokeWidth="14" />
      <path d="M1377 170l42-20 42 20v55l-42 35-42-35z" fill="#8d9096" />
      <path d="M1377 170l42 22 42-22M1419 192v66" fill="none" stroke="#7d8086" strokeWidth="3" />
      <path d="M130 945v40" stroke="#2a3380" strokeWidth="5" />
      <path d="M100 1010v-30" stroke="#1f5a3c" strokeWidth="6" />
      <path d="M140 1025l40-45" stroke="#7a2a2a" strokeWidth="6" />
    </g>
    <Statistics />
  </Viewport>
);

const Statistics = () => (
  <foreignObject x="0" y="20" width="110" height="84">
    <div className="h-[58px] w-[96px] border-[5px] border-[#c4182c] pt-0.5 pl-1.5 text-[10px] text-[#d2c860]">
      <table className="w-full leading-[14px]">
        <tbody>
          <tr><td className="w-[34px]"></td><td>Total</td></tr>
          <tr><td>Polys:</td><td>63,177</td></tr>
          <tr><td>Verts:</td><td>39,926</td></tr>
        </tbody>
      </table>
    </div>
    <p className="mt-1 pl-2.5 text-[10px] text-[#d2c860]">FPS:</p>
  </foreignObject>
);

const Timeline = () => (
  <div className="bg-[#434343]">
    <div className="flex h-[15px] items-center text-[10px] text-[#bbb]">
      <button aria-label="Previous frame" className="w-4">&lt;</button>
      <div className="h-full w-[103px] border-r-2 border-[#1c1c1c] bg-[#383838] text-center">0 / 100</div>
      <button aria-label="Next frame" className="w-4">&gt;</button>
    </div>
    <div className="mr-11 flex h-[23px] bg-[#262626]">
      <div className="flex w-[47px] shrink-0 items-center justify-center bg-[#3b3b3b]">
        <Network className="size-4 text-[#ccc]" />
      </div>
      <div className="flex flex-1 text-[10px] text-[#a5a5a5]">
        {Array.from({ length: 20 }, (_, i) => (
          <div key={i} className="min-w-0 flex-1">
            <div className="flex h-2 justify-between">
              {[0, 1, 2, 3, 4].map((t) => (
                <span key={t} className="flex-1 border-l border-[#6c6c6c]" />
              ))}
            </div>
            {i === 0 ? (
              <span className="-mt-2 block h-[22px] w-1.5 bg-[#b5b030]" />
            ) : (
              <span className="block w-5 -translate-x-1/2 text-center">{i * 5}</span>
            )}
          </div>
        ))}
        <span className="w-2 pt-2"><span className="-ml-2.5">100</span></span>
      </div>
    </div>
  </div>
);

const off = "text-[#0e0e0e]";
const lit = "text-[#d6d6d6]";

const PanelButton = ({ children, enabled }) => (
  <button className={`h-4 min-w-0 flex-1 border-r border-b border-[#222] bg-[#474747] text-[10px] whitespace-nowrap ${enabled ? lit : off}`}>
    {children}
  </button>
);

const Spin = ({ label, value = "", width = "flex-1" }) => (
  <div className={`flex h-3 min-w-0 ${width}`}>
    <input aria-label={label} defaultValue={value} className="w-full min-w-0 flex-1 border-t-2 border-l-2 border-[#1c1c1c] bg-[#5a5a5a] px-1 text-[10px] leading-none text-[#ccc]" />
    <span className="ml-1.5 flex flex-col justify-center text-[6px] leading-[6px] text-[#ddd]"><span>▲</span><span>▼</span></span>
  </div>
);

const Radio = ({ name, label, checked }) => (
  <label className="flex items-center gap-1">
    <input type="radio" name={name} defaultChecked={checked} className="size-2 appearance-none rounded-full border border-[#1c1c1c] checked:bg-[#151515]" />
    {label}
  </label>
);

const Rollout = ({ title, closed }) => (
  <h3 className="flex h-3 items-center bg-[#3b3b3b] text-[10px] text-[#d0d0d0]">
    <span className="w-4 text-center">{closed ? "+" : "-"}</span>
    <span className="flex-1 pr-4 text-center">{title}</span>
  </h3>
);

const panelTabs = [
  [Sun, "fill-[#f2b04a] text-[#e08a2a]"], [Ruler, "text-[#59a5c8]"], [Network, "text-[#e6e6e6]"],
  [Circle, "fill-[#bbb] text-[#888]"], [Monitor, "fill-[#ccc] text-[#eee]"], [Hammer, "text-[#ccc]"],
];

const CommandPanel = () => (
  <aside className="w-[310px] shrink-0 border-l-2 border-[#333] bg-[#444] text-[10px] leading-3 whitespace-nowrap">
    <div className="flex h-5 border-b border-[#2a2a2a]">
      <div className="flex w-[146px] items-center justify-around bg-[#2c2c2c]">
        {panelTabs.map(([Icon, c], i) => (
          <button key={i} aria-label={`Panel ${i + 1}`}><Icon className={`size-[15px] ${c}`} /></button>
        ))}
      </div>
    </div>
    <div className="flex h-[705px]">
      <ModifyColumn />
      <GeometryColumn />
    </div>
  </aside>
);

const ModifyColumn = () => (
  <div className={`w-[154px] shrink-0 border-r-2 border-[#2a2a2a] px-1.5 pt-1.5 ${off}`}>
    <div className="flex h-4 gap-1">
      <input aria-label="Object name" defaultValue="Layer:室内人口" className="min-w-0 flex-1 border-t border-l border-[#222] bg-[#505050] px-0.5 text-[#d8d8d8]" />
      <span className="w-3.5 border-t-[6px] border-black bg-white" />
    </div>
    <div className="mt-1.5 flex h-[17px] border-t border-l border-[#222] bg-[#505050] text-[#ccc]">
      <select aria-label="Modifier list" className="min-w-0 flex-1 appearance-none px-0.5"><option>Modifier List</option></select>
      <span className="flex w-4 items-center justify-center bg-[#f2f2f2] text-[7px] text-black">▼</span>
    </div>
    <div className="mt-1.5 h-[107px] border border-[#8fb3b5] bg-[#525658]">
      <div className="flex h-3 items-center gap-2 bg-[#3d3d3d] pl-1.5 text-[#aaa]">
        <span className="size-2 bg-black" /> Editable Mesh
      </div>
    </div>
    <div className="flex h-[33px] items-center justify-around border-b-2 border-[#222] text-[#ccc]">
      <Pin className="size-3 text-[#888]" /><span className="h-3 w-px bg-[#222]" />
      <Minus className="size-3.5 rotate-90" strokeWidth={4} /><span className="h-3 w-px bg-[#222]" />
      <Network className="size-3.5" /><Hand className="size-3.5" /><span className="h-3 w-px bg-[#222]" />
      <Copy className="size-3.5 fill-[#ccc]" />
    </div>
    <div className="mt-3 mr-0.5 h-[232px] border border-[#2b2b2b] border-t-[#777]">
      <Rollout title="Selection" />
      <div className="flex h-7 items-center justify-center gap-2 px-3 text-[#e02020]">
        <Circle className="size-3 text-[#7a2424]" /><Play className="size-3 text-[#a82424]" /><Play className="size-3 fill-[#d02020]" />
        <Square className="size-3 fill-[#e02020]" /><Box className="size-3 fill-[#e02020]" />
      </div>
      <div className="px-1.5">
        <div className="flex h-4 items-center"><Check dark label="By Vertex" /></div>
        <div className="flex h-4 items-center"><Check dark label="Ignore Backfacing" /></div>
        <div className="flex h-4 items-center"><Check dark label="Ignore Visible Edges" /></div>
        <div className="flex h-4 items-center justify-end gap-1">Planar Thresh: <Spin label="Planar threshold" value="45.0" width="w-12" /></div>
        <div className="flex h-4 items-center"><Check dark label="Show Normals" /></div>
        <div className="flex h-4 items-center justify-end gap-1">Scale: <Spin label="Normal scale" value="20.0" width="w-12" /></div>
        <div className="flex h-4 items-center"><Check dark checked label="Delete Isolated Vertices" /></div>
      </div>
      <div className="mt-2 flex gap-1 px-1"><PanelButton>Hide</PanelButton><PanelButton>Unhide All</PanelButton></div>
      <p className={`h-4 pt-0.5 pl-2 ${lit}`}>Named Selections:</p>
      <div className="flex gap-1 px-1"><PanelButton>Copy</PanelButton><PanelButton>Paste</PanelButton></div>
      <p className={`pt-1 pr-1.5 text-right ${lit}`}>Whole Object Selected</p>
    </div>
    <div className="mt-2 mr-0.5"><Rollout closed title="Soft Selection" /></div>
  </div>
);

const GeometryColumn = () => (
  <div className={`min-w-0 flex-1 pt-1 pr-3 pl-1 ${off}`}>
    <div className="border border-[#2b2b2b] px-1 pb-2">
      <div className="-mx-1"><Rollout title="Edit Geometry" /></div>
      <div className="mt-1.5 flex flex-col gap-[3px]">
        <div className="flex gap-1"><PanelButton>Create</PanelButton><PanelButton>Delete</PanelButton></div>
        <div className="flex gap-1"><PanelButton enabled>Attach</PanelButton><PanelButton enabled>Attach List</PanelButton></div>
        <div className="flex gap-1"><PanelButton>Break</PanelButton><PanelButton>Turn</PanelButton></div>
      </div>
      <div className="mt-1 border border-[#2b2b2b] p-0.5">
        <div className="flex h-[18px] items-center gap-1"><PanelButton>Extrude</PanelButton><Spin label="Extrude" value="0.0" /></div>
        <div className="flex h-[18px] items-center gap-1"><PanelButton>Bevel</PanelButton><Spin label="Bevel" value="0.0" /></div>
        <div className="flex h-[18px] items-center gap-1">Normal: <Radio name="normal" label="Group" checked /><Radio name="normal" label="Local" /></div>
      </div>
      <div className="mt-1 border border-[#2b2b2b] p-0.5">
        <div className="flex h-[18px] items-center gap-1"><PanelButton>Slice Plane</PanelButton><PanelButton>Slice</PanelButton></div>
        <div className="flex h-[18px] items-center gap-2"><div className="flex w-14"><PanelButton>Cut</PanelButton></div><Check dark label="Split" /></div>
        <div className="flex h-[18px] items-center pl-0.5"><Check dark checked label="Refine Ends" /></div>
      </div>
      <fieldset className="mt-0.5 min-w-0 border border-[#2b2b2b] px-0.5">
        <legend className={lit}>Weld</legend>
        <div className="flex h-[18px] items-center gap-1"><PanelButton>Selected</PanelButton><Spin label="Weld selected" /></div>
        <div className="flex h-[18px] items-center gap-1">
          <div className="flex w-12"><PanelButton>Target</PanelButton></div><Spin label="Weld target" value="4" width="w-8" />pixels
        </div>
      </fieldset>
      <div className="mt-1 border border-[#2b2b2b] p-0.5">
        <div className="flex h-[18px] items-center gap-1"><PanelButton>Tessellate</PanelButton><Spin label="Tessellate" value="25.0" /></div>
        <div className="flex h-3.5 items-center gap-1">by: <Radio name="tess" label="Edge" checked /><Radio name="tess" label="Face-Center" /></div>
      </div>
      <div className={`mt-0.5 border border-[#2b2b2b] p-0.5 ${lit}`}>
        <div className="flex h-[18px] items-center gap-1"><PanelButton enabled>Explode</PanelButton><Spin label="Explode" value="24.0" /></div>
        <div className="flex h-[18px] items-center gap-1">to: <Radio name="explode" label="Objects" checked /><Radio name="explode" label="Elements" /></div>
      </div>
      <div className="mt-1 flex flex-col gap-[3px]">
        <div className="flex"><PanelButton enabled>Remove Isolated Vertices</PanelButton></div>
        <div className="flex"><PanelButton>Select Open Edges</PanelButton></div>
        <div className="flex"><PanelButton>Create Shape from Edges</PanelButton></div>
        <div className="flex gap-1"><PanelButton enabled>View Align</PanelButton><PanelButton enabled>Grid Align</PanelButton></div>
        <div className="flex gap-1"><PanelButton>Make Planar</PanelButton><PanelButton>Collapse</PanelButton></div>
      </div>
    </div>
    <div className="mt-1.5"><Rollout closed title="Surface Properties" /></div>
  </div>
);

const Coord = ({ axis, value }) => (
  <label className="flex items-center gap-1">
    {axis}:
    <input defaultValue={value} className="h-[17px] w-12 border-t border-l border-[#1c1c1c] bg-[#5a5c5e] px-1 text-[#bbb]" />
    <span className="w-3 text-[6px] leading-[6px]">▲<br />▼</span>
  </label>
);

const StatusBar = () => (
  <footer className="flex h-[33px] overflow-hidden border-t-2 border-[#262626] bg-[#444] text-[10px] leading-[11px] whitespace-nowrap text-[#b5b5b5]">
    <div className="w-[83px] shrink-0 bg-white">
      <div className="h-[18px] bg-[#ecc8cc]" />
      <p className="pl-1 font-['Liberation_Mono'] text-[#444]">Welcome to M</p>
    </div>
    <div className="min-w-0 flex-1">
      <div className="flex h-5 items-center border-b border-[#333]">
        <p className="flex-1 pl-3">1 Object Selected</p>
        <div className="mr-3 flex items-center gap-3">
          <Pin className="size-3 fill-[#d06060] text-[#d06060]" />
          <Lock className="size-3" />
          <Grid2x2 className="size-3.5 text-[#ddd]" />
        </div>
        <div className="flex items-center gap-1.5">
          <Coord axis="X" value="795.605" />
          <Coord axis="Y" value="255.267" />
          <Coord axis="Z" value="0.0" />
          <span className="w-[90px]">Grid = 100.0</span>
        </div>
      </div>
      <div className="flex">
        <p className="flex-1 pl-3">Click and drag to select and move objects</p>
        <span className="mr-2 h-3 w-4 bg-[#1c78c0]" />
        <button className="mr-6">Add Time Tag</button>
      </div>
    </div>
    <div className="flex w-10 items-center justify-center"><Key className="size-5 rotate-45 text-black" /></div>
    <div className="grid w-[332px] shrink-0 grid-cols-[44px_96px_1fr] items-center gap-x-2 border-l border-[#222] pl-1">
      <button className="text-left">Auto Key</button>
      <DropDown label="Key set" value="Selected" width="w-full" />
      <div className="flex justify-around pl-1 text-[#ddd]">
        {[SkipBack, StepBack, Play, StepForward, SkipForward, Search, Grid2x2, LineChart, ZoomIn].map((Icon, i) => (
          <button key={i} aria-label={`Playback ${i + 1}`}><Icon className="size-3" /></button>
        ))}
      </div>
      <button className="text-left">Set Key</button>
      <button className="flex items-center gap-4"><LineChart className="size-3 text-[#c06070]" /> Key Filters...</button>
      <div className="flex items-center justify-around pl-1 text-[#ddd]">
        <StepForward className="size-3" />
        <input aria-label="Frame" defaultValue="0" className="h-3.5 w-[50px] border-t border-l border-[#1c1c1c] bg-[#555] px-1" />
        {[Lock, Play, Hand, RotateCw, Maximize].map((Icon, i) => (
          <button key={i} aria-label={`Navigation ${i + 1}`}><Icon className="size-3" /></button>
        ))}
      </div>
    </div>
  </footer>
);

export default App;
